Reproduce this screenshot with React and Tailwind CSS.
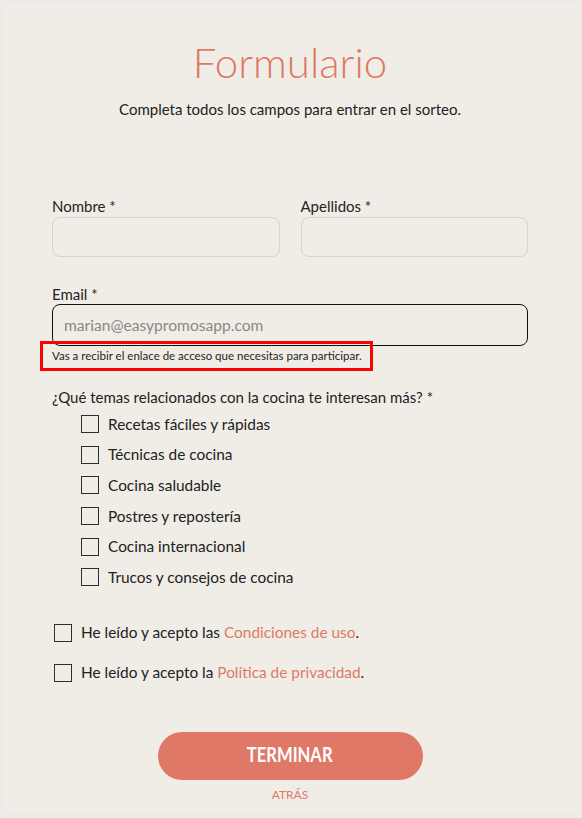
import { useState } from "react";

const topics = [
  "Recetas fáciles y rápidas",
  "Técnicas de cocina",
  "Cocina saludable",
  "Postres y repostería",
  "Cocina internacional",
  "Trucos y consejos de cocina",
];

function Box({ checked, onClick }) {
  return (
    <span
      onClick={onClick}
      className="flex h-[18px] w-[18px] shrink-0 cursor-pointer items-center justify-center border-[1.5px] border-[#2e2e2e] bg-transparent"
    >
      {checked && <span className="h-[10px] w-[10px] bg-[#df7867]" />}
    </span>
  );
}

export default function App() {
  const [picked, setPicked] = useState({});
  const toggle = (k) => setPicked((p) => ({ ...p, [k]: !p[k] }));

  return (
    <div className="min-h-screen bg-[#ebebea] px-[3px] pt-[4px] font-['Lato','Open_Sans',sans-serif] text-[#222]">
      <div className="h-[809px] w-[577px] bg-[#f0ede7] pl-[49px] pr-[52px] pt-[33px]">
        <h1 className="text-center text-[42px] font-light leading-[50px] text-[#df7867]">
          Formulario
        </h1>
        <p className="mt-[12px] text-center text-[15px] leading-[20px]">
          Completa todos los campos para entrar en el sorteo.
        </p>

        <div className="mt-[77px] grid grid-cols-2 gap-x-[21px]">
          <label className="block">
            <span className="block text-[15px] leading-[20px]">Nombre *</span>
            <input className="mt-[1px] h-[40px] w-full rounded-[8px] border border-[#d6d3cd] bg-transparent px-3 outline-none" />
          </label>
          <label className="block">
            <span className="block text-[15px] leading-[20px]">Apellidos *</span>
            <input className="mt-[1px] h-[40px] w-full rounded-[8px] border border-[#d6d3cd] bg-transparent px-3 outline-none" />
          </label>
        </div>

        <label className="mt-[27px] block">
          <span className="block text-[15px] leading-[20px]">Email *</span>
          <input
            placeholder="marian@easypromosapp.com"
            className="h-[42px] w-full rounded-[8px] border border-[#111] bg-transparent px-[11px] text-[15.6px] outline-none placeholder:text-[#8a8884]"
          />
        </label>
        <div className="relative -ml-[12px] -mt-[5px] h-[30px] w-[333px] border-[3px] border-[#ff0000] pl-[9px] text-[11.5px] leading-[24px] text-[#1e1e1e]">
          Vas a recibir el enlace de acceso que necesitas para participar.
        </div>

        <p className="mt-[16px] text-[15px] leading-[20px]">
          ¿Qué temas relacionados con la cocina te interesan más? *
        </p>
        <div className="mt-[2px] pl-[29px]">
          {topics.map((t) => (
            <div key={t} className="flex h-[30.6px] items-center gap-[9px] text-[15.4px]">
              <Box checked={picked[t]} onClick={() => toggle(t)} />
              <span>{t}</span>
            </div>
          ))}
        </div>

        <div className="mt-[25px] flex flex-col gap-[10px] pl-[2px]">
          <div className="flex h-[30px] items-center gap-[9px] text-[15.4px]">
            <Box checked={picked.terms} onClick={() => toggle("terms")} />
            <span>
              He leído y acepto las <a className="text-[#df7867]">Condiciones de uso</a>.
            </span>
          </div>
          <div className="flex h-[30px] items-center gap-[9px] text-[15.4px]">
            <Box checked={picked.privacy} onClick={() => toggle("privacy")} />
            <span>
              He leído y acepto la <a className="text-[#df7867]">Política de privacidad</a>.
            </span>
          </div>
        </div>

        <div className="mt-[44px] flex flex-col items-center">
          <button className="h-[48px] w-[265px] rounded-full bg-[#df7867] text-white">
            <span className="inline-block scale-x-[0.83] text-[20px] font-bold leading-none">
              TERMINAR
            </span>
          </button>
          <a className="mt-[7px] text-[12px] leading-[16px] text-[#df7867]">ATRÁS</a>
        </div>
      </div>
    </div>
  );
}
